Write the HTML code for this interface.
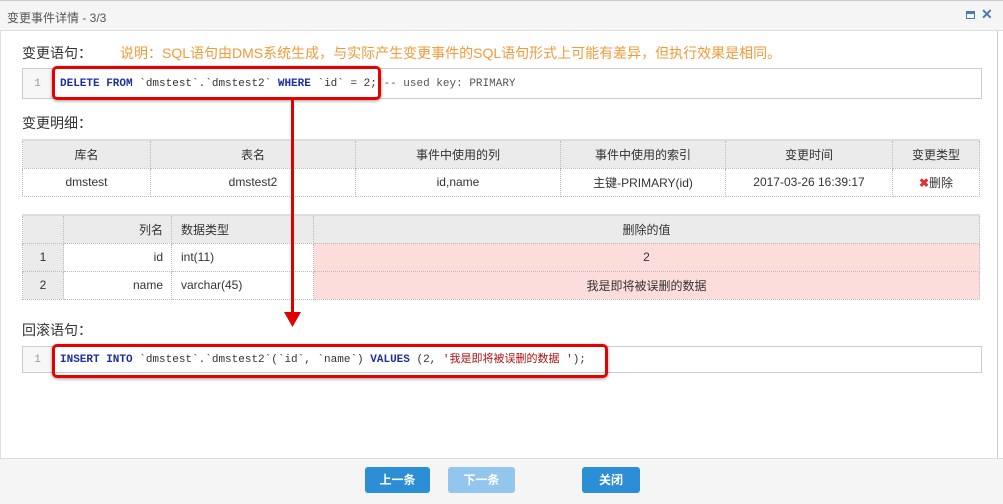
<!DOCTYPE html>
<html><head><meta charset="utf-8"><style>
*{margin:0;padding:0;box-sizing:border-box}
body{width:1003px;height:504px;position:relative;background:#fff;font-family:"Liberation Sans","Noto Sans CJK SC",sans-serif;font-size:12px;color:#333;overflow:hidden}
.a{position:absolute}
.title{left:0;top:0;width:1003px;height:31px;background:#f5f5f5;border-bottom:1px solid #ddd;border-top:1px solid #ccc}
.mono{font-family:"Liberation Mono","Noto Sans CJK SC",monospace;font-size:11px;line-height:14px}
.code{left:22px;width:960px;border:1px solid #ccc;background:#fff}
.gut{position:absolute;left:0;top:0;bottom:0;width:30px;background:#f7f7f7;border-right:1px solid #e5e5e5;color:#999;text-align:center}
.kw{color:#1a2fa0;font-weight:bold}
.rb{border:3px solid #e60000;border-radius:5px;box-shadow:0 1px 3px rgba(0,0,0,.4)}
table{border-collapse:collapse;position:absolute;left:22px;width:958px;table-layout:fixed}
td,th{border:1px dotted #bbb;height:28px;font-weight:normal;text-align:center;font-size:12px}
th{background:#ebebeb}
tr.first th{border-top:2px solid #ddd}
.pk{background:#fddcdc}
.btn{top:467px;height:26px;color:#fff;font-weight:bold;text-align:center;line-height:26px;border-radius:3px;background:#2c8fd6;font-size:12px}
</style></head><body>
<div class="a title"><span class="a" style="left:7px;top:8px;color:#555;font-size:12px">变更事件详情 - 3/3</span>
<span class="a" style="left:966px;top:10px;width:9px;height:8px;border:1px solid #4a7ab0;border-top-width:3px"></span>
<span class="a" style="left:981px;top:5px;color:#4a7ab0;font-size:14px;font-weight:bold">✕</span></div>
<div class="a" style="left:997px;top:31px;width:1px;height:428px;background:#ccc"></div>
<div class="a" style="left:0;top:31px;width:1px;height:428px;background:#ddd"></div>
<div class="a" style="left:22px;top:43px;font-size:14px">变更语句：</div>
<div class="a" style="left:120px;top:43px;font-size:14px;color:#f29a3a">说明：SQL语句由DMS系统生成，与实际产生变更事件的SQL语句形式上可能有差异，但执行效果是相同。</div>
<div class="a code mono" style="top:68px;height:31px"><div class="gut" style="padding-top:8px">1</div>
<div class="a" style="left:37px;top:8px;white-space:pre"><span class="kw">DELETE FROM</span> `dmstest`.`dmstest2` <span class="kw">WHERE</span> `id` = 2; <span style="color:#555">-- used key: PRIMARY</span></div></div>
<div class="a rb" style="left:52px;top:66px;width:329px;height:34px"></div>
<div class="a" style="left:22px;top:113px;font-size:14px">变更明细：</div>
<table style="top:139px"><colgroup><col style="width:128px"><col style="width:205px"><col style="width:205px"><col style="width:165px"><col style="width:167px"><col></colgroup>
<tr class="first"><th>库名</th><th>表名</th><th>事件中使用的列</th><th>事件中使用的索引</th><th>变更时间</th><th>变更类型</th></tr>
<tr><td>dmstest</td><td>dmstest2</td><td>id,name</td><td>主键-PRIMARY(id)</td><td>2017-03-26 16:39:17</td><td><span style="color:#e03030;font-weight:bold">✖</span>删除</td></tr></table>
<table style="top:214px"><colgroup><col style="width:41px"><col style="width:108px"><col style="width:142px"><col></colgroup>
<tr class="first"><th></th><th style="text-align:right;padding-right:8px">列名</th><th style="text-align:left;padding-left:9px">数据类型</th><th>删除的值</th></tr>
<tr><th>1</th><td style="text-align:right;padding-right:8px">id</td><td style="text-align:left;padding-left:9px">int(11)</td><td class="pk">2</td></tr>
<tr><th>2</th><td style="text-align:right;padding-right:8px">name</td><td style="text-align:left;padding-left:9px">varchar(45)</td><td class="pk">我是即将被误删的数据</td></tr></table>
<div class="a" style="left:291px;top:100px;width:3px;height:216px;background:#e00000"></div>
<svg class="a" style="left:284px;top:312px" width="17" height="16"><path d="M0 0 L17 0 L8.5 15 Z" fill="#e00000"/></svg>
<div class="a" style="left:22px;top:320px;font-size:14px">回滚语句：</div>
<div class="a code mono" style="top:346px;height:27px"><div class="gut" style="padding-top:6px">1</div>
<div class="a" style="left:37px;top:6px;white-space:pre"><span class="kw">INSERT INTO</span> `dmstest`.`dmstest2`(`id`, `name`) <span class="kw">VALUES</span> (2, <span style="color:#a11">'我是即将被误删的数据 '</span>);</div></div>
<div class="a rb" style="left:52px;top:344px;width:556px;height:34px"></div>
<div class="a" style="left:0;top:458px;width:1003px;height:46px;background:#f5f5f5;border-top:1px solid #ddd"></div>
<div class="a btn" style="left:365px;width:65px">上一条</div>
<div class="a btn" style="left:448px;width:67px;background:#92c6ec">下一条</div>
<div class="a btn" style="left:582px;width:58px">关闭</div>
</body></html>
